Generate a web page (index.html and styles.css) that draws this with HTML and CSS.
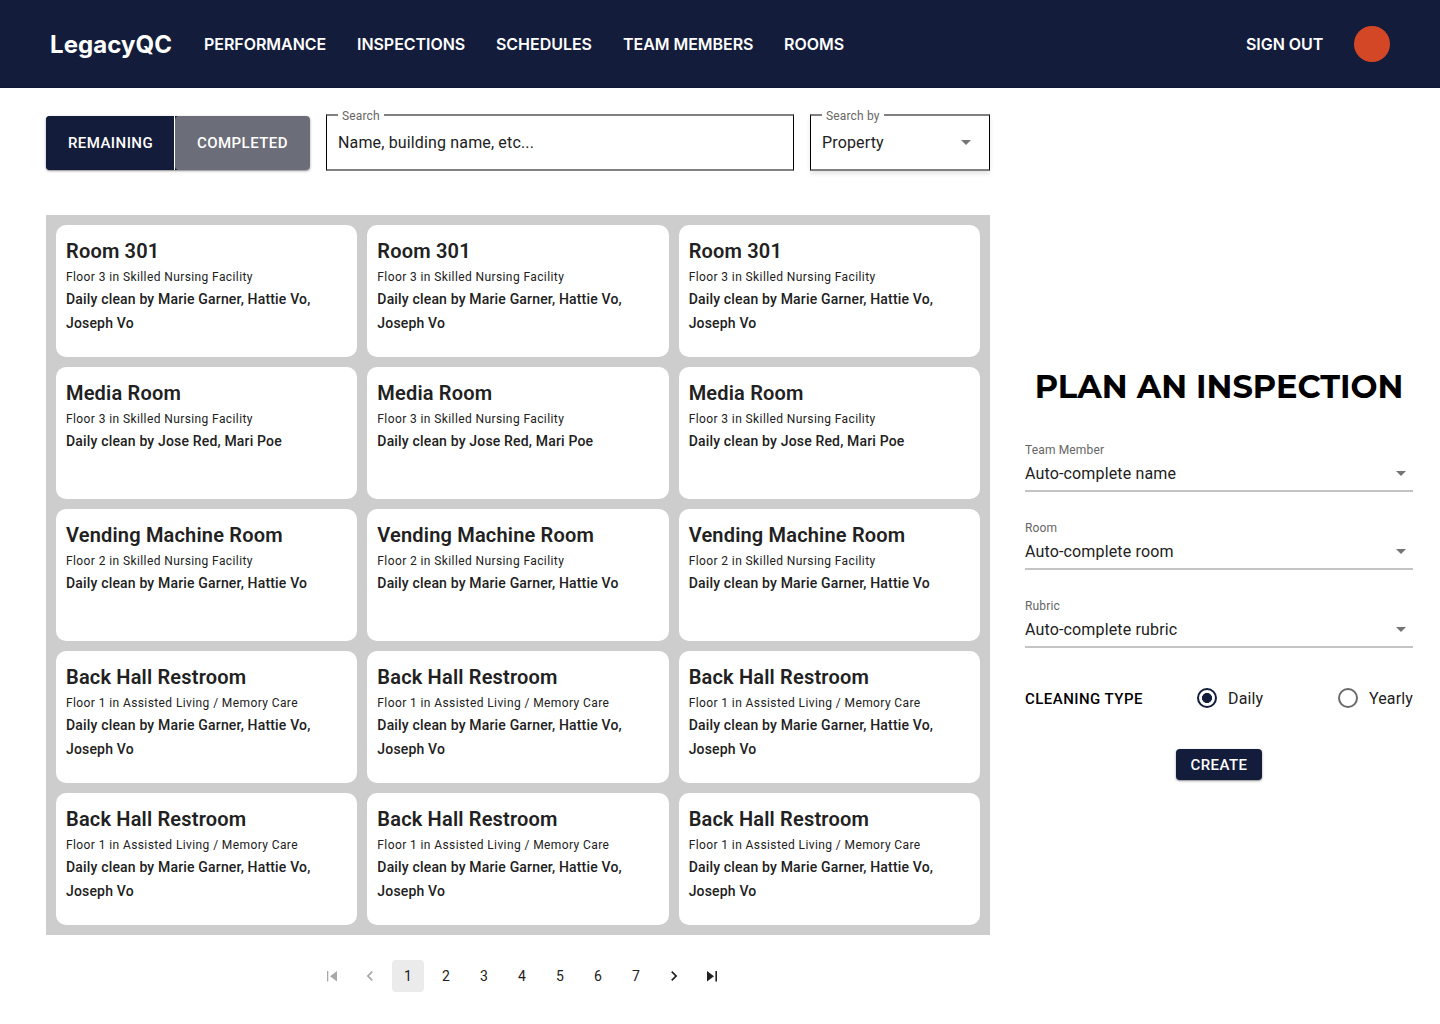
FILE: index.html
```html
<!DOCTYPE html>
<html lang="en">
<head>
<meta charset="utf-8">
<title>LegacyQC</title>
<link rel="stylesheet" href="styles.css">
</head>
<body>
<header class="topbar">
  <a class="brand">LegacyQC</a>
  <nav class="nav"><a class="n1">PERFORMANCE</a><a class="n2">INSPECTIONS</a><a class="n3">SCHEDULES</a><a class="n4">TEAM MEMBERS</a><a>ROOMS</a></nav>
  <a class="signout">SIGN OUT</a>
  <span class="avatar"></span>
</header>
<main class="main">
  <section class="rooms">
    <div class="toolbar">
      <div class="toggle"><button class="seg seg-on">REMAINING</button><button class="seg seg-off">COMPLETED</button></div>
      <div class="field field-search"><span class="legend">Search</span><span>Name, building name, etc...</span></div>
      <div class="field field-by"><span class="legend">Search by</span><span>Property</span><i class="caret"></i></div>
    </div>
    <div class="grid" id="grid"></div>
    <nav class="pages">
      <span class="page off"><svg width="24" height="24" viewBox="0 0 24 24"><path d="M7 7h1.3v10.5H7zM17 7v10.5L10 12.25z"/></svg></span>
      <span class="page off"><svg width="20" height="20" viewBox="0 0 24 24"><path d="M15.41 7.41 14 6l-6 6 6 6 1.41-1.41L10.83 12z"/></svg></span>
      <span class="page current">1</span><span class="page">2</span><span class="page">3</span><span class="page">4</span><span class="page">5</span><span class="page">6</span><span class="page">7</span>
      <span class="page"><svg width="20" height="20" viewBox="0 0 24 24"><path d="M10 6 8.59 7.41 13.17 12l-4.58 4.59L10 18l6-6z"/></svg></span>
      <span class="page"><svg width="24" height="24" viewBox="0 0 24 24"><path d="M7 7v10.5l7-5.25zM15.4 7H17v10.5h-1.6z"/></svg></span>
    </nav>
  </section>
  <aside class="plan">
    <h1 class="plan-title">PLAN AN INSPECTION</h1>
    <div class="line-field"><label>Team Member</label><div class="value">Auto-complete name<i class="caret"></i></div></div>
    <div class="line-field"><label>Room</label><div class="value">Auto-complete room<i class="caret"></i></div></div>
    <div class="line-field"><label>Rubric</label><div class="value">Auto-complete rubric<i class="caret"></i></div></div>
    <div class="type"><span class="type-name">CLEANING TYPE</span>
      <span class="option daily"><i class="radio checked"></i>Daily</span>
      <span class="option"><i class="radio"></i>Yearly</span></div>
    <button class="create">CREATE</button>
  </aside>
</main>
<script src="rooms.js"></script>
</body>
</html>
```
FILE: styles.css
```css
* { box-sizing: border-box; }
body { margin: 0; background: #fff; color: #212121; font-family: Roboto, sans-serif; }
button { border: 0; padding: 0; font: inherit; color: #fff; }
.topbar { height: 88px; padding: 0 50px; display: flex; align-items: center; background: #131c3a; border-bottom: 1px solid #10163a; color: #fff; font: 600 16px/24px Inter, sans-serif; font-optical-sizing: none; letter-spacing: -.04px; }
.brand { width: 154px; padding-top: 2px; font-size: 24px; font-weight: 750; line-height: 32px; letter-spacing: .08px; }
.nav { display: flex; flex: 1; white-space: nowrap; }
.n1 { width: 153px; }
.n2 { width: 139px; }
.n3 { width: 127px; }
.n4 { width: 161px; }
.signout { width: 108px; white-space: nowrap; }
.avatar { width: 36px; height: 36px; border-radius: 50%; background: #d34727; }
.main { display: grid; grid-template-columns: 944px 388px; column-gap: 35px; padding: 26px 27px 0 46px; }
.toolbar { display: flex; gap: 16px; height: 57px; margin-bottom: 44px; }
.toggle { display: flex; width: 264px; height: 54px; margin-top: 2px; border-radius: 4px; background: linear-gradient(90deg, #131c3a 50%, transparent 50%); box-shadow: 0 1px 3px rgba(0,0,0,.3), 0 1px 1px rgba(0,0,0,.2); }
.seg { font-size: 15px; font-weight: 500; letter-spacing: .46px; }
.seg-on { width: 129px; padding-left: 1px; border-right: 1px solid #fff; border-radius: 4px 0 0 4px; background: #131c3a; }
.seg-off { width: 135px; border-radius: 4px; background: #6b6d78; }
.field { position: relative; display: flex; align-items: center; justify-content: space-between; padding: 1px 18px 0 11px; border: solid #000; border-width: 2px 1px; border-top-color: #808080; border-bottom-color: #808080; font-size: 16px; line-height: 24px; letter-spacing: .15px; }
.field-search { width: 468px; }
.field-by { width: 180px; box-shadow: 0 3px 4px rgba(0,0,0,.1); }
.legend { position: absolute; top: -6px; left: 11px; padding: 0 4px; background: #fff; color: #666; font-size: 12px; line-height: 12px; }
.caret { width: 0; height: 0; margin-bottom: 2px; border: 5px solid transparent; border-top-color: #757575; border-bottom: 0; }
.grid { display: grid; grid-template-columns: repeat(3, 1fr); grid-auto-rows: 132px; gap: 10px; padding: 10px; background: #cdcdcd; }
.card { padding: 10px; border-radius: 10px; background: #fff; }
.card h2 { margin: 0; font-size: 20px; font-weight: 600; line-height: 32px; letter-spacing: .18px; }
.card p { margin: 0; font-size: 12px; line-height: 20px; letter-spacing: .4px; }
.card .crew { font-size: 14px; font-weight: 500; line-height: 24px; letter-spacing: .17px; }
.pages { display: flex; justify-content: center; gap: 6px; margin: 25px 0 0 8px; }
.page { display: flex; align-items: center; justify-content: center; width: 32px; height: 32px; border-radius: 4px; font-size: 14px; }
.page svg { fill: currentColor; }
.off { color: #a8a8a8; }
.current { background: #ebebeb; }
.plan { display: flex; flex-direction: column; padding-top: 253px; }
.plan-title { margin: 0 0 30px; color: #000; font: 700 32px/40px Montserrat, Inter, sans-serif; text-align: center; white-space: nowrap; }
.line-field { height: 55px; margin-bottom: 23px; border-bottom: 2px solid #c4c4c4; }
.line-field label { display: block; color: #666; font-size: 12px; line-height: 12px; letter-spacing: .15px; padding-top: 7px; height: 25px; }
.value { display: flex; align-items: center; justify-content: space-between; padding-right: 7px; font-size: 16px; line-height: 24px; letter-spacing: .15px; }
.type { display: flex; align-items: center; height: 24px; margin-top: 15px; font-size: 16px; letter-spacing: .15px; white-space: nowrap; }
.type-name { width: 172px; padding-top: 1px; color: #000; font-size: 15px; font-weight: 500; letter-spacing: .46px; }
.option { display: flex; align-items: center; gap: 11px; }
.daily { flex: 1; }
.radio { width: 20px; height: 20px; border: 2px solid #6b6b6b; border-radius: 50%; }
.checked { border-color: #131c3a; background: radial-gradient(circle, #131c3a 4.7px, transparent 5.3px); }
.create { align-self: center; width: 86px; height: 31px; margin-top: 39px; border-radius: 4px; background: #131c3a; font-size: 15px; font-weight: 500; letter-spacing: .46px; box-shadow: 0 1px 3px rgba(0,0,0,.3), 0 1px 1px rgba(0,0,0,.2); }
```
FILE: rooms.js
```js
const rooms = [
  ["Room 301", "Floor 3 in Skilled Nursing Facility", "Marie Garner, Hattie Vo, Joseph Vo"],
  ["Media Room", "Floor 3 in Skilled Nursing Facility", "Jose Red, Mari Poe"],
  ["Vending Machine Room", "Floor 2 in Skilled Nursing Facility", "Marie Garner, Hattie Vo"],
  ["Back Hall Restroom", "Floor 1 in Assisted Living / Memory Care", "Marie Garner, Hattie Vo, Joseph Vo"],
  ["Back Hall Restroom", "Floor 1 in Assisted Living / Memory Care", "Marie Garner, Hattie Vo, Joseph Vo"]
];
const card = ([name, place, crew]) =>
  `<article class="card"><h2>${name}</h2><p>${place}</p><p class="crew">Daily clean by ${crew}</p></article>`;
document.getElementById("grid").innerHTML = rooms.map(r => card(r).repeat(3)).join("");
```
